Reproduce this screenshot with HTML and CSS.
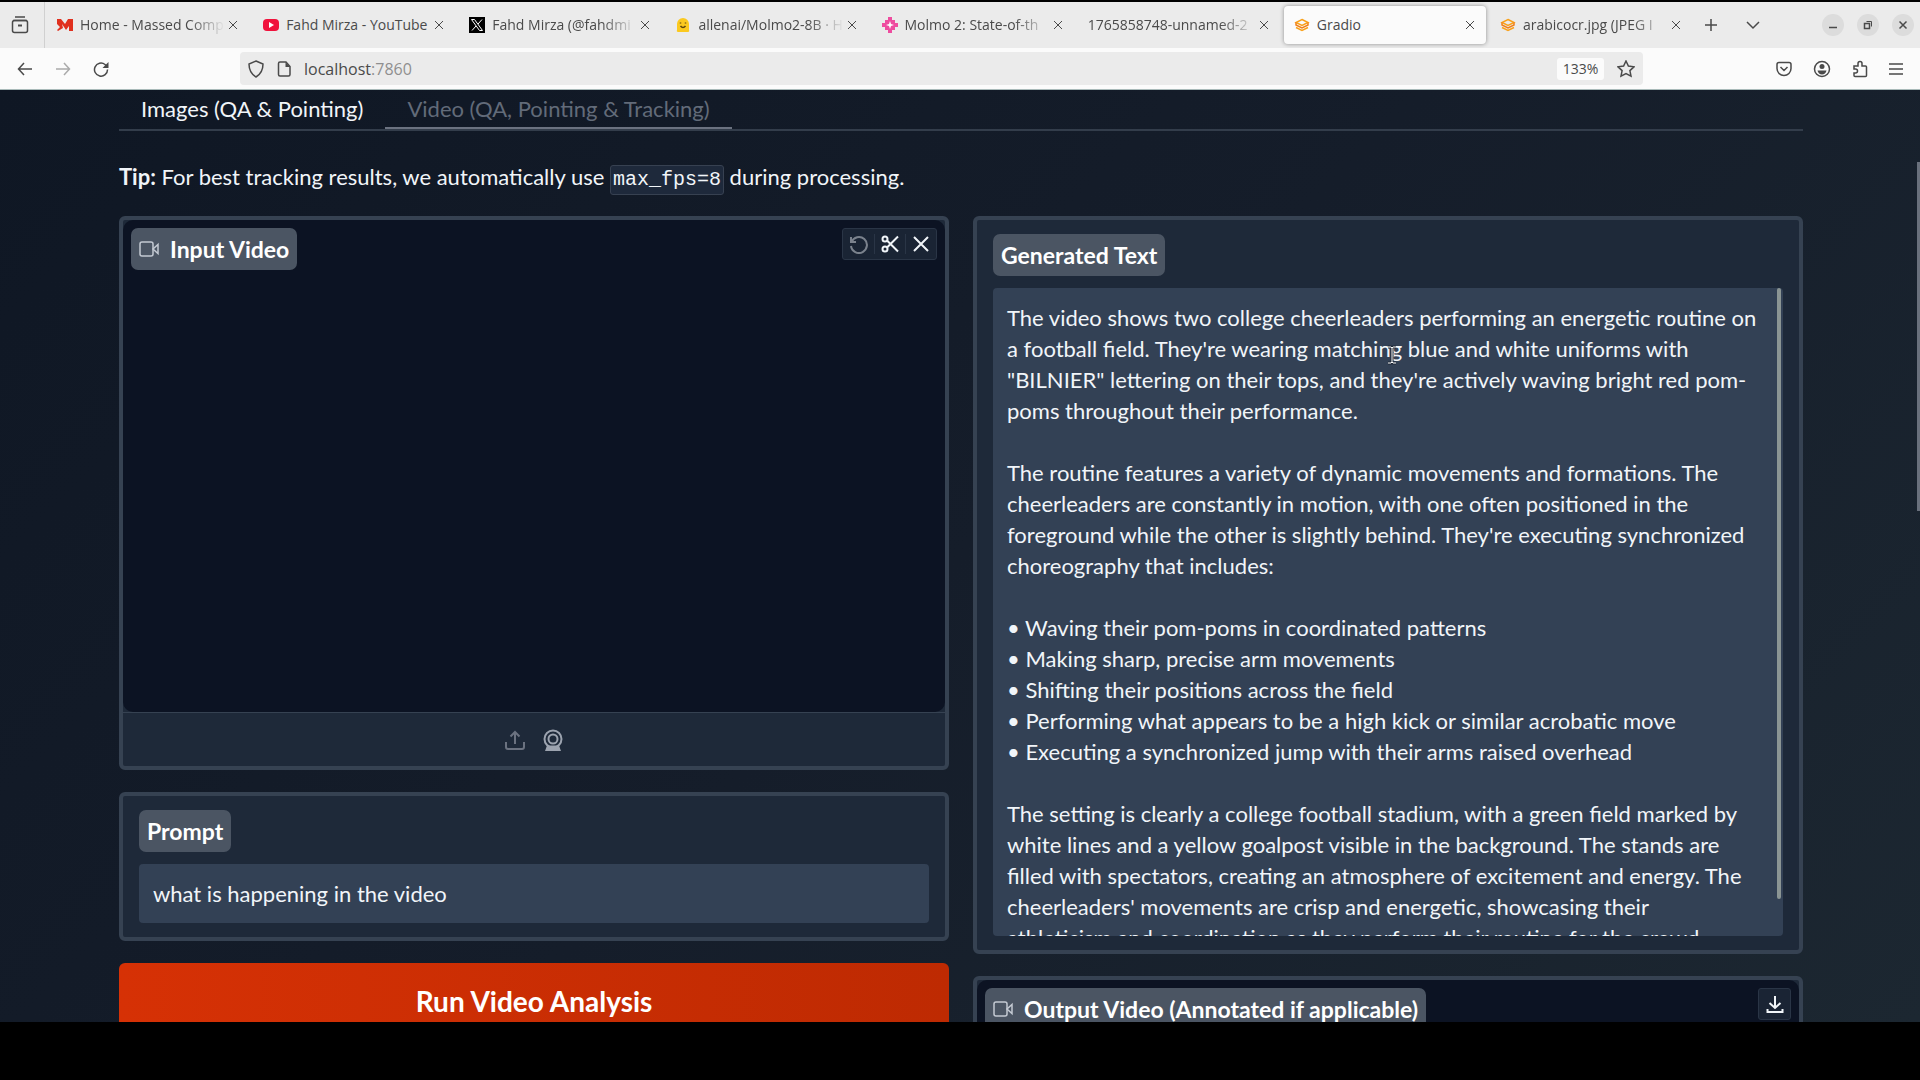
FILE: index.html
```html
<!DOCTYPE html>
<html lang="en">
<head>
    <meta charset="UTF-8">
    <meta name="viewport" content="width=device-width, initial-scale=1.0">
    <title>Gradio</title>
    <link rel="stylesheet" href="styles.css">
</head>
<body>
    <!-- Browser tabs -->
    <header class="tab-strip">
        <button class="icon-btn recent" aria-label="Recent browsing">
            <svg width="18" height="18" viewBox="0 0 18 18"><path d="M4 1h10M2 4.500h14" /><rect x="1.500" y="4.500" width="15" height="12" rx="2" /><path d="M7 9.500h4" stroke-width="2" /></svg>
        </button>
        <nav class="tabs">
            <div class="tab">
                <svg class="favicon" viewBox="0 0 16 16"><path d="M0 2h4l4 5 3-5h5v12h-4V9l-3 4-4-6 1 4-5 3-1-1 3-3-3-3z" fill="#e0301e" stroke="none" /></svg>
                <a href="#" class="fade">Home - Massed Comp</a>
                <button aria-label="Close tab"><svg width="10" height="10" viewBox="0 0 10 10"><path d="M1 1l8 8M9 1L1 9" /></svg></button>
            </div>
            <div class="tab">
                <svg class="favicon" viewBox="0 0 16 16"><rect y="2" width="16" height="12" rx="4" fill="#f0123c" stroke="none" /><path d="M6 5l5 3-5 3z" fill="#fff" stroke="none" /></svg>
                <a href="#">Fahd Mirza - YouTube</a>
                <button aria-label="Close tab"><svg width="10" height="10" viewBox="0 0 10 10"><path d="M1 1l8 8M9 1L1 9" /></svg></button>
            </div>
            <div class="tab">
                <svg class="favicon" viewBox="0 0 16 16"><rect width="16" height="16" fill="#000" stroke="none" /><path d="M2.500 2.500h3l8 11h-3zM13 2.500L9 7M7 9l-4 4.500" stroke="#fff" stroke-width="1" /></svg>
                <a href="#" class="fade">Fahd Mirza (@fahdmi</a>
                <button aria-label="Close tab"><svg width="10" height="10" viewBox="0 0 10 10"><path d="M1 1l8 8M9 1L1 9" /></svg></button>
            </div>
            <div class="tab">
                <svg class="favicon" viewBox="0 0 16 16"><path d="M2 13V7a6 6 0 0 1 12 0v6q1 2-2 2H4q-3 0-2-2z" fill="#fbc91f" stroke="none" /><path d="M5.500 5.500v1M10.500 5.500v1M5.500 9q2.500 3 5 0" stroke="#5b4510" /></svg>
                <a href="#" class="fade">allenai/Molmo2-8B · H</a>
                <button aria-label="Close tab"><svg width="10" height="10" viewBox="0 0 10 10"><path d="M1 1l8 8M9 1L1 9" /></svg></button>
            </div>
            <div class="tab">
                <svg class="favicon" viewBox="0 0 16 16"><path d="M6 0h4v3h3v3h3v4h-3v3h-3v3H6v-3H3v-3H0V6h3V3h3z" fill="#ee4c9f" stroke="none" /><path d="M8 4l1 3 3 1-3 1-1 3-1-3-3-1 3-1z" fill="#fff" stroke="none" /></svg>
                <a href="#" class="fade">Molmo 2: State-of-th</a>
                <button aria-label="Close tab"><svg width="10" height="10" viewBox="0 0 10 10"><path d="M1 1l8 8M9 1L1 9" /></svg></button>
            </div>
            <div class="tab">
                <a href="#" class="fade">1765858748-unnamed-2</a>
                <button aria-label="Close tab"><svg width="10" height="10" viewBox="0 0 10 10"><path d="M1 1l8 8M9 1L1 9" /></svg></button>
            </div>
            <div class="tab active">
                <svg class="favicon" viewBox="0 0 16 16"><path d="M8 2.500l6 3-6 3-6-3zM2 10.500L8 13.500l6-3" stroke="#f9a11b" stroke-width="1.500" /><path d="M2 5.500v2.500l6 3 6-3V5.500" stroke="#f0801c" stroke-width="1.500" /></svg>
                <a href="#">Gradio</a>
                <button aria-label="Close tab"><svg width="10" height="10" viewBox="0 0 10 10"><path d="M1 1l8 8M9 1L1 9" /></svg></button>
            </div>
            <div class="tab">
                <svg class="favicon" viewBox="0 0 16 16"><path d="M8 2.500l6 3-6 3-6-3zM2 10.500L8 13.500l6-3" stroke="#f9a11b" stroke-width="1.500" /><path d="M2 5.500v2.500l6 3 6-3V5.500" stroke="#f0801c" stroke-width="1.500" /></svg>
                <a href="#" class="fade">arabicocr.jpg (JPEG I</a>
                <button aria-label="Close tab"><svg width="10" height="10" viewBox="0 0 10 10"><path d="M1 1l8 8M9 1L1 9" /></svg></button>
            </div>
        </nav>
        <div class="tab-tools">
            <button class="icon-btn" aria-label="New tab"><svg width="14" height="14" viewBox="0 0 14 14"><path d="M7 1v12M1 7h12" /></svg></button>
            <button class="icon-btn" aria-label="List tabs"><svg width="14" height="14" viewBox="0 0 14 14"><path d="M1 4l6 6 6-6" /></svg></button>
        </div>
        <div class="window-buttons">
            <button aria-label="Minimize"><svg width="10" height="10" viewBox="0 0 10 10"><path d="M1 7.500h8" /></svg></button>
            <button aria-label="Restore"><svg width="10" height="10" viewBox="0 0 10 10"><path d="M1.500 3.500h5v5h-5z" /><path d="M3.500 1.500h5v5" stroke-width="1" /></svg></button>
            <button aria-label="Close"><svg width="10" height="10" viewBox="0 0 10 10"><path d="M1.500 1.500l7 7M8.500 1.500l-7 7" /></svg></button>
        </div>
    </header>

    <!-- Address bar -->
    <div class="toolbar">
        <div class="nav-buttons">
            <button class="icon-btn" aria-label="Back"><svg width="16" height="16" viewBox="0 0 16 16"><path d="M15 8H1.500M7 2L1.500 8 7 14" /></svg></button>
            <button class="icon-btn faded" aria-label="Forward"><svg width="16" height="16" viewBox="0 0 16 16"><path d="M1 8h13.500M9 2l5.500 6L9 14" /></svg></button>
            <button class="icon-btn" aria-label="Reload"><svg width="16" height="16" viewBox="0 0 16 16"><path d="M14.500 8.500A6.500 6.500 0 1 1 12 3.500l2 2" /><path d="M15.500 1v6h-6z" fill="#4a4a4a" stroke="none" /></svg></button>
        </div>
        <div class="url-bar">
            <svg width="16" height="18" viewBox="0 0 16 18"><path d="M8 1l7 3c0 6-2 10-7 13C3 14 1 10 1 4z" /></svg>
            <svg width="14" height="16" viewBox="0 0 14 16"><path d="M1.500 2.500q0-1.500 1.500-1.500h6l4 4.500v8q0 1.500-1.500 1.500H3q-1.500 0-1.500-1.500z" /><path d="M8.500 1l4.500 5H8.500z" fill="#4a4a4a" stroke="none" /></svg>
            <p class="url">localhost<span>:7860</span></p>
            <button class="zoom-level">133%</button>
            <button class="icon-btn" aria-label="Bookmark"><svg width="18" height="18" viewBox="0 0 18 18"><path d="M9 1l2.400 5.100 5.600.700-4.100 3.800 1.100 5.600L9 13.500l-5 2.700 1.100-5.600L1 6.800l5.600-.700z" /></svg></button>
        </div>
        <div class="actions">
            <button class="icon-btn" aria-label="Pocket"><svg width="16" height="16" viewBox="0 0 16 16"><path d="M3 1.500h10q2 0 2 2v4a7 7 0 0 1-14 0v-4q0-2 2-2zM4.500 6L8 9.500 11.500 6" /></svg></button>
            <button class="icon-btn" aria-label="Account"><svg width="18" height="18" viewBox="0 0 18 18"><circle cx="9" cy="9" r="7.500" /><circle cx="9" cy="6.500" r="2.500" fill="#4a4a4a" stroke="none" /><path d="M4.500 10.500h9q-1 4-4.500 4t-4.500-4z" fill="#4a4a4a" stroke="none" /></svg></button>
            <button class="icon-btn" aria-label="Extensions"><svg width="16" height="18" viewBox="0 0 16 18"><path d="M2 6h4V3.500a2 2 0 0 1 4 0V6h3.500q1 0 1 1v8.500q0 1-1 1H3q-1 0-1-1V13h1.500a2 2 0 0 0 0-4H2z" /></svg></button>
            <button class="icon-btn" aria-label="Menu"><svg width="14" height="14" viewBox="0 0 14 14"><path d="M0 2h14M0 7h14M0 12h14" /></svg></button>
        </div>
    </div>

    <!-- Gradio app -->
    <main class="app">
        <div class="page-scroll"></div>
        <div class="app-tabs" role="tablist">
            <button role="tab">Images (QA &amp; Pointing)</button>
            <button role="tab" class="selected" aria-selected="true">Video (QA, Pointing &amp; Tracking)</button>
        </div>

        <p class="tip"><strong>Tip:</strong> For best tracking results, we automatically use <code>max_fps=8</code> during processing.</p>

        <div class="columns">
            <div class="column">
                <section class="panel">
                    <div class="video-area input-area">
                        <h2 class="label"><svg width="20" height="16" viewBox="0 0 20 16"><rect x="1" y="1" width="13" height="14" rx="2" /><path d="M14 8l5-4.500v9z" /></svg>Input Video</h2>
                        <div class="video-tools">
                            <button class="faded" aria-label="Undo"><svg width="20" height="20" viewBox="0 0 20 20"><path d="M2 3v5h5M2.500 8a8 8 0 1 1-.500 4" /></svg></button>
                            <button aria-label="Trim"><svg width="18" height="18" viewBox="0 0 18 18"><circle cx="4" cy="4" r="2.500" /><circle cx="4" cy="14" r="2.500" /><path d="M6 5.500l11 11M6 12.500L17 1.500" /></svg></button>
                            <button aria-label="Clear"><svg width="18" height="18" viewBox="0 0 18 18"><path d="M2 2l14 14M16 2L2 16" /></svg></button>
                        </div>
                    </div>
                    <div class="sources">
                        <button aria-label="Upload file"><svg width="20" height="20" viewBox="0 0 20 20"><path d="M10 14V2M5.500 6.500L10 2l4.500 4.500M1 12v5q0 2 2 2h14q2 0 2-2v-5" /></svg></button>
                        <button class="webcam" aria-label="Record from camera"><svg width="20" height="22" viewBox="0 0 20 22"><circle cx="10" cy="10" r="8.500" /><circle cx="10" cy="10" r="4.500" /><path d="M4 16.500h12L18 22H2z" fill="#9ca3af" stroke="none" /></svg></button>
                    </div>
                </section>

                <section class="panel padded">
                    <label class="label" for="prompt">Prompt</label>
                    <input type="text" id="prompt" value="what is happening in the video">
                </section>

                <button class="run">Run Video Analysis</button>
            </div>

            <div class="column">
                <section class="panel padded">
                    <label class="label" for="generated-text">Generated Text</label>
                    <div class="output-text">
                        <textarea id="generated-text" wrap="off" readonly>The video shows two college cheerleaders performing an energetic routine on
a football field. They're wearing matching blue and white uniforms with
"BILNIER" lettering on their tops, and they're actively waving bright red pom-
poms throughout their performance.

The routine features a variety of dynamic movements and formations. The
cheerleaders are constantly in motion, with one often positioned in the
foreground while the other is slightly behind. They're executing synchronized
choreography that includes:

• Waving their pom-poms in coordinated patterns
• Making sharp, precise arm movements
• Shifting their positions across the field
• Performing what appears to be a high kick or similar acrobatic move
• Executing a synchronized jump with their arms raised overhead

The setting is clearly a college football stadium, with a green field marked by
white lines and a yellow goalpost visible in the background. The stands are
filled with spectators, creating an atmosphere of excitement and energy. The
cheerleaders' movements are crisp and energetic, showcasing their
athleticism and coordination as they perform their routine for the crowd.</textarea>
                        <div class="text-scroll"></div>
                        <svg class="pointer" width="10" height="20" viewBox="0 0 10 20"><path d="M1 2h3l1 1 1-1h3M5 3v14M1 18h3l1-1 1 1h3" stroke="#1f2937" stroke-width="3" /><path d="M1 2h3l1 1 1-1h3M5 3v14M1 18h3l1-1 1 1h3" /></svg>
                    </div>
                </section>

                <section class="panel">
                    <div class="video-area">
                        <h2 class="label"><svg width="20" height="16" viewBox="0 0 20 16"><rect x="1" y="1" width="13" height="14" rx="2" /><path d="M14 8l5-4.500v9z" /></svg>Output Video (Annotated if applicable)</h2>
                        <div class="video-tools">
                            <button aria-label="Download"><svg width="18" height="18" viewBox="0 0 18 18"><path d="M9 1v12M3.500 8L9 13l5.500-5M1.500 14v3h15v-3" /></svg></button>
                        </div>
                    </div>
                </section>
            </div>
        </div>
    </main>
</body>
</html>
```

FILE: styles.css
```css
* {
    box-sizing: border-box;
}
body {
    font-family: Lato, "Open Sans", sans-serif;
    background-color: #000;
    margin: 0;
    padding: 2px 0 58px;
    height: 100vh;
    display: flex;
    flex-direction: column;
    overflow: hidden;
}
button {
    font-family: inherit;
    background: none;
    border: none;
    margin: 0;
    padding: 0;
    color: inherit;
}
svg {
    fill: none;
    stroke: currentColor;
    stroke-width: 1.5;
    flex: none;
    display: block;
}

/* Browser chrome */
.tab-strip, .toolbar {
    font-family: "Open Sans", "Noto Sans", sans-serif;
    color: #4a4a4a;
    display: flex;
    align-items: center;
    flex: none;
}
.tab-strip {
    height: 46px;
    background-color: #ebebeb;
}
.icon-btn {
    display: flex;
    align-items: center;
    justify-content: center;
}
.recent {
    flex: none;
    width: 45px;
    height: 46px;
    padding-right: 4px;
    border-right: 1px solid #d0d0d0;
}
.tabs {
    display: flex;
    flex: 1;
    min-width: 0;
    gap: 4px;
    padding-left: 2px;
}
.tab {
    flex: 1;
    min-width: 0;
    height: 38px;
    padding: 0 8px 0 10px;
    display: flex;
    align-items: center;
    border-radius: 4px;
}
.tab.active {
    background-color: #fbfbfb;
    box-shadow: 0 0 4px rgba(0, 0, 0, 0.4);
}
.favicon {
    width: 16px;
    height: 16px;
    margin-right: 7px;
}
.tab a {
    flex: 1;
    min-width: 0;
    font-size: 14px;
    line-height: 20px;
    color: #4a4a4a;
    text-decoration: none;
    white-space: nowrap;
}
.tab .fade {
    -webkit-mask-image: linear-gradient(to left, transparent, #000 36px);
    mask-image: linear-gradient(to left, transparent, #000 36px);
}
.tab button {
    display: flex;
    justify-content: center;
    width: 16px;
}
.tab button svg {
    stroke-width: 1;
}
.tab-tools {
    display: flex;
    flex: none;
    width: 130px;
    padding-left: 12px;
    gap: 28px;
}
.window-buttons {
    display: flex;
    flex: none;
    gap: 13px;
    padding-right: 6px;
}
.window-buttons button {
    width: 22px;
    height: 22px;
    border-radius: 50%;
    background-color: #dcdcdc;
    display: flex;
    align-items: center;
    justify-content: center;
}
.toolbar {
    height: 42px;
    background-color: #fbfbfb;
    border-bottom: 1px solid #a9bab9;
}
.nav-buttons {
    display: flex;
    flex: none;
    gap: 22px;
    width: 240px;
    padding-left: 17px;
}
.faded {
    opacity: 0.45;
}
.url-bar {
    flex: 1;
    height: 33px;
    display: flex;
    align-items: center;
    gap: 13px;
    padding: 0 8px;
    border-radius: 4px;
    background-color: #ebebeb;
}
.url {
    flex: 1;
    margin: 0;
    font-size: 16px;
}
.url span {
    color: #8f8f8f;
}
.zoom-level {
    width: 47px;
    height: 22px;
    border-radius: 3px;
    background-color: #fbfbfb;
    font-size: 14px;
}
.actions {
    display: flex;
    flex: none;
    justify-content: flex-end;
    gap: 21px;
    width: 277px;
    padding-right: 17px;
}

/* App */
.app {
    position: relative;
    flex: 1;
    min-height: 0;
    overflow: hidden;
    padding: 0 117px 0 119px;
    background: linear-gradient(135deg, #0f1724, #151d2a 50%, #1c2731);
    color: #f1f5f9;
    font-size: 22px;
}
.page-scroll {
    position: absolute;
    top: 72px;
    right: 0;
    width: 3px;
    height: 349px;
    background-color: #69707c;
}
.app-tabs {
    display: flex;
    border-bottom: 2px solid #333d4b;
}
.app-tabs button {
    height: 39px;
    padding: 0 22px;
    font-size: 22px;
    border-bottom: 2px solid transparent;
}
.app-tabs .selected {
    color: #626b79;
    border-bottom-color: #6b7280;
}
.tip {
    margin: 31px 0 21px;
    line-height: 30px;
}
.tip code {
    display: inline-block;
    padding: 0 2px;
    border: 1px solid #374151;
    border-radius: 3px;
    background-color: #1e293b;
    font-family: "Liberation Mono", monospace;
    font-size: 20px;
    line-height: 28px;
}
.columns {
    display: grid;
    grid-template-columns: 1fr 1fr;
    gap: 24px;
    align-items: start;
}
.column {
    display: flex;
    flex-direction: column;
    gap: 22px;
}
.panel {
    border: 4px solid #364252;
    border-radius: 6px;
    background-color: #1e2939;
}
.padded {
    display: flex;
    flex-direction: column;
    align-items: flex-start;
    gap: 12px;
    padding: 14px 16px;
}
.label {
    display: flex;
    align-items: center;
    gap: 11px;
    margin: 0;
    padding: 6px 8px;
    border-radius: 7px;
    background-color: #4b5563;
    color: #fff;
    font-size: 23px;
    font-weight: 700;
    line-height: 30px;
}
.label svg {
    color: #c3c9d2;
}
.video-area {
    display: flex;
    align-items: flex-start;
    justify-content: space-between;
    min-height: 200px;
    padding: 8px;
    border-radius: 10px;
    background-color: #0c1323;
}
.input-area {
    min-height: 492px;
}
.video-tools {
    display: flex;
    padding: 5px 0;
    border: 1px solid #2a3546;
    border-radius: 3px;
    background-color: #1a2434;
}
.video-tools button {
    display: flex;
    align-items: center;
    justify-content: center;
    width: 31px;
    height: 20px;
    border-left: 1px solid #2a3546;
}
.video-tools button:first-child {
    border-left: none;
}
.video-tools svg {
    stroke-width: 2;
}
.sources {
    display: flex;
    align-items: center;
    justify-content: center;
    gap: 18px;
    height: 54px;
    border-top: 1px solid #364252;
    color: #6b7280;
}
.sources svg {
    stroke-width: 2;
}
.webcam {
    color: #9ca3af;
}
input, textarea {
    display: block;
    width: 100%;
    border: none;
    border-radius: 4px;
    outline: none;
    background-color: #334155;
    color: #f1f5f9;
    font-family: inherit;
    font-size: 22px;
}
input {
    height: 59px;
    padding: 0 14px;
}
.run {
    height: 76px;
    border-radius: 6px;
    background: linear-gradient(90deg, #d63105, #be2a02);
    color: #fff;
    font-size: 28px;
    font-weight: 700;
}
.output-text {
    position: relative;
    width: 100%;
}
textarea {
    height: 648px;
    padding: 14px;
    line-height: 31px;
    resize: none;
    overflow: hidden;
}
.text-scroll {
    position: absolute;
    top: 0;
    right: 2px;
    width: 4px;
    height: 611px;
    border-radius: 2px;
    background-color: #8b9594;
}
.pointer {
    position: absolute;
    top: 57px;
    left: 394px;
    color: #fff;
    stroke-width: 1;
}
```
